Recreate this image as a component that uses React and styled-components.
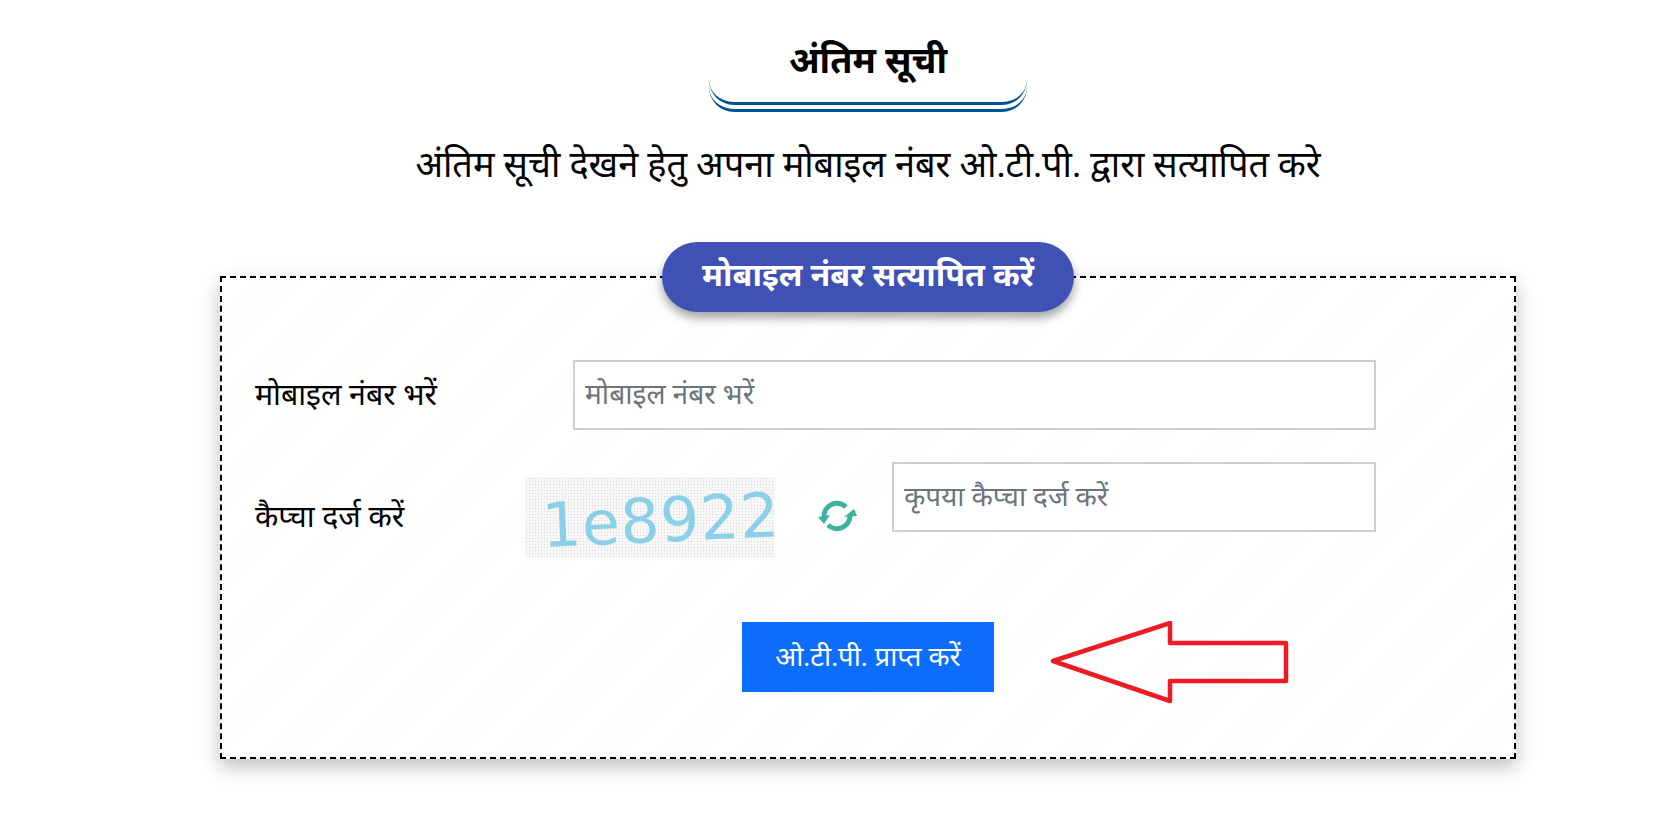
import React from 'react';
import styled, { createGlobalStyle } from 'styled-components';

const GlobalStyle = createGlobalStyle`
  html, body {
    margin: 0;
    padding: 0;
    background: #fff;
  }
  body {
    font-family: "Liberation Serif", "Noto Sans", serif;
    color: #000;
  }
`;

const Page = styled.div`
  width: 1296px;
  margin-left: 220px;
  padding-top: 27px;
  padding-bottom: 40px;
`;

const TitleBlock = styled.div`
  position: relative;
  width: 318px;
  height: 85px;
  margin: 0 auto;
  text-align: center;
  border-bottom: 3px solid #00529b;
  border-radius: 0 0 25px 25px;
  box-sizing: border-box;

  &::after {
    content: '';
    position: absolute;
    left: 0;
    right: 0;
    top: 0;
    bottom: 4px;
    border-bottom: 3px solid #00529b;
    border-radius: 0 0 25px 25px;
  }
`;

const Title = styled.h2`
  margin: 0;
  font-size: 36px;
  font-weight: 700;
  line-height: 68px;
`;

const Subtitle = styled.p`
  margin: 28px 0 0;
  text-align: center;
  font-size: 36.15px;
  line-height: 50px;
`;

const Card = styled.div`
  position: relative;
  box-sizing: border-box;
  height: 483px;
  margin-top: 86px;
  padding: 82px 33px 0 33px;
  border: 2px dashed #000;
  background: repeating-linear-gradient(135deg, #fff 0 28px, #fdfdfd 28px 56px);
  box-shadow: 0 8px 18px rgba(0, 0, 0, 0.25);
`;

const Pill = styled.div`
  position: absolute;
  top: -36px;
  left: 440px;
  width: 412px;
  height: 70px;
  border-radius: 35px;
  background: #3f51b5;
  color: #fff;
  font-size: 32.2px;
  font-weight: 700;
  line-height: 66px;
  text-align: center;
  box-shadow: 0 6px 10px rgba(0, 0, 0, 0.35);
`;

const Row = styled.div`
  display: flex;
  align-items: center;
  margin-bottom: ${(p) => p.$gap || 0}px;
  padding-top: ${(p) => p.$pad || 0}px;
`;

const Label = styled.label`
  flex: 0 0 ${(p) => p.$width}px;
  padding-bottom: 4px;
  font-size: 30.3px;
`;

const Input = styled.input`
  box-sizing: border-box;
  flex: 0 0 ${(p) => p.$width}px;
  height: ${(p) => p.$height}px;
  padding: 0 10px;
  border: 2px solid #cbced3;
  background: #fff;
  font-family: inherit;
  font-size: 28.2px;
  outline: none;

  &::placeholder {
    color: #6c757d;
  }
`;

const RaisedInput = styled(Input)`
  align-self: flex-start;
  margin-top: -15px;
  font-size: 27.8px;
`;

const Captcha = styled.div`
  box-sizing: border-box;
  flex: 0 0 250px;
  min-width: 0;
  height: 80px;
  padding-left: 19px;
  background-color: #f7f7f7;
  background-image: radial-gradient(#dcd8d8 0.8px, transparent 1px);
  background-size: 3px 3px;
  color: #8ccfe8;
  font-family: "DejaVu Sans", sans-serif;
  font-size: 61.5px;
  letter-spacing: 0.7px;
  line-height: 84px;
  white-space: nowrap;
`;

const CaptchaText = styled.span`
  display: inline-block;
  transform: translateY(7px) rotate(-2.6deg);
  transform-origin: left bottom;
`;

const Refresh = styled.svg`
  flex: 0 0 40px;
  width: 40px;
  height: 34px;
  margin: 0 34px 0 43px;
`;

const Actions = styled.div`
  position: relative;
  display: flex;
  justify-content: center;
  margin-top: 65px;
`;

const Button = styled.button`
  width: 252px;
  height: 70px;
  padding: 0 0 4px;
  border: 0;
  background: #0d6efd;
  color: #fff;
  font-family: inherit;
  font-size: 27.5px;
`;

const Arrow = styled.svg`
  position: absolute;
  left: 795px;
  top: -1px;
  width: 240px;
  height: 84px;
`;

export default function App() {
  return (
    <>
      <GlobalStyle />
      <Page>
        <TitleBlock>
          <Title>अंतिम सूची</Title>
        </TitleBlock>
        <Subtitle>अंतिम सूची देखने हेतु अपना मोबाइल नंबर ओ.टी.पी. द्वारा सत्यापित करे</Subtitle>
        <Card>
          <Pill>मोबाइल नंबर सत्यापित करें</Pill>
          <Row $gap={32}>
            <Label $width={318}>मोबाइल नंबर भरें</Label>
            <Input $width={803} $height={70} placeholder="मोबाइल नंबर भरें" />
          </Row>
          <Row $pad={15}>
            <Label $width={270}>कैप्चा दर्ज करें</Label>
            <Captcha>
              <CaptchaText>1e8922</CaptchaText>
            </Captcha>
            <Refresh viewBox="0 0 40 34">
              <path
                d="M6 17A13 13 0 0 1 28 7M10 25A13 13 0 0 0 32 15"
                fill="none"
                stroke="#3db39e"
                strokeWidth="5"
              />
              <path d="M0 17l12-2-6 9zM36 9l-10 8 13-1z" fill="#3db39e" />
            </Refresh>
            <RaisedInput $width={484} $height={70} placeholder="कृपया कैप्चा दर्ज करें" />
          </Row>
          <Actions>
            <Button>ओ.टी.पी. प्राप्त करें</Button>
            <Arrow viewBox="0 0 240 84">
              <path
                d="M3 40 L120 2 V22 H236 V60 H120 V80 Z"
                fill="none"
                stroke="#ed1c24"
                strokeWidth="4.5"
                strokeLinejoin="round"
              />
            </Arrow>
          </Actions>
        </Card>
      </Page>
    </>
  );
}
